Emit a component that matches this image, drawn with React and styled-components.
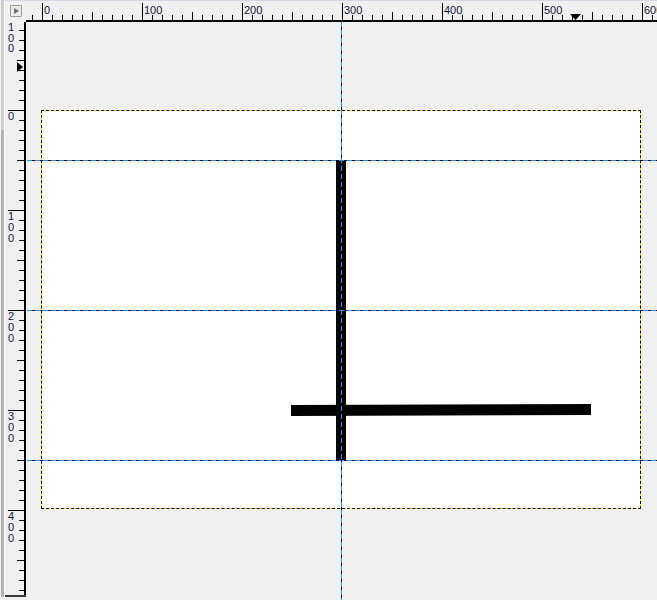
import React from 'react';
import styled, { createGlobalStyle } from 'styled-components';

const GlobalStyle = createGlobalStyle`
  html, body {
    margin: 0;
    padding: 0;
    background: #f0f0f0;
  }
  * {
    box-sizing: border-box;
  }
`;

// canvas origin on the page (ruler zero)
const ORIGIN_X = 42;
const ORIGIN_Y = 110;

const Window = styled.div`
  display: flex;
  width: 657px;
  height: 600px;
  overflow: hidden;
  background: #f0f0f0;
  font-family: 'Liberation Sans', Arial, sans-serif;
`;

const EdgeStrip = styled.div`
  width: 5px;
  height: 597px;
  background: linear-gradient(#cdcdcd 0 130px, #b4b4b4 130px);
  border-left: 1px solid #f0f0f0;
  border-right: 1px solid #fbfbfb;
`;

const Workspace = styled.div`
  flex: 1;
  display: grid;
  grid-template-columns: 21px 1fr;
  grid-template-rows: 22px 1fr;
`;

const Corner = styled.div`
  display: flex;
  align-items: flex-start;
  padding: 5px 0 0 5px;
  box-shadow: inset 0 1px 0 #d6d6e6;
`;

const NavButton = styled.div`
  width: 12px;
  height: 12px;
  border: 1px solid #9c9c9c;
  border-radius: 1px;
  background: #ebebeb;
  display: flex;
  align-items: center;
  justify-content: center;

  &::after {
    content: '';
    display: block;
    margin-left: 1px;
    border-left: 5px solid #6c6c6c;
    border-top: 3.5px solid transparent;
    border-bottom: 3.5px solid transparent;
  }
`;

const RulerSvg = styled.svg`
  display: block;
  overflow: hidden;

  text {
    font-family: 'Liberation Sans', Arial, sans-serif;
    font-size: 11px;
    fill: #14143a;
  }
`;

const Viewport = styled.div`
  position: relative;
  overflow: hidden;
  padding: 88px 0 0 15px;
`;

const ImageFrame = styled.div`
  width: 600px;
  height: 399px;
  border: 1px dashed #000;
  background: linear-gradient(#fff, #fff) padding-box, #ffe600 border-box;
`;

const Drawing = styled.svg`
  display: block;
`;

const Guide = styled.div`
  position: absolute;
  ${(p) =>
    p.$vertical
      ? `
    top: 0;
    bottom: 0;
    left: ${p.$at}px;
    width: 1px;
    background: repeating-linear-gradient(to bottom, #1e90ff 0 5px, #000 5px 8px);
  `
      : `
    left: 1px;
    right: 0;
    top: ${p.$at}px;
    height: 1px;
    background: repeating-linear-gradient(to right, #1e90ff 0 5px, #000 5px 8px);
  `}
`;

const range = (from, to, step) => {
  const out = [];
  for (let v = from; v <= to; v += step) out.push(v);
  return out;
};

const TopRuler = () => (
  <RulerSvg width="631" height="22" viewBox="26 0 631 22">
    <rect x="26" y="0" width="631" height="1" fill="#d6d6e6" />
    {range(-10, 620, 10).map((v) => {
      const x = ORIGIN_X + v + 0.5;
      const y1 = v % 100 === 0 ? 3 : v % 50 === 0 ? 12 : 15;
      return <line key={v} x1={x} x2={x} y1={y1} y2="20" stroke="#000" strokeWidth="1" />;
    })}
    {range(0, 600, 100).map((v) => (
      <text key={v} x={ORIGIN_X + v + 2} y="14">
        {v}
      </text>
    ))}
    <rect x="26" y="20" width="631" height="2" fill="#000" />
    <polygon points="570,14 581,14 575.5,20" fill="#000" />
  </RulerSvg>
);

const LeftRuler = () => (
  <RulerSvg width="21" height="578" viewBox="5 22 21 578">
    {range(-110, 490, 10).map((v) => {
      const y = ORIGIN_Y + v + 0.5;
      const x1 = v % 100 === 0 ? 8 : v % 50 === 0 ? 17 : 19;
      return <line key={v} x1={x1} x2="24" y1={y} y2={y} stroke="#000" strokeWidth="1" />;
    })}
    {range(-100, 400, 100).map((v) =>
      String(v)
        .split('')
        .map((ch, i) => (
          <text key={`${v}-${i}`} x="8" y={ORIGIN_Y + v + 10 + i * 10.8}>
            {ch}
          </text>
        ))
    )}
    <rect x="24" y="22" width="2" height="575" fill="#000" />
    <rect x="5" y="595" width="21" height="2" fill="#3a3a3a" />
    <polygon points="17,62 17,72 23,67" fill="#000" />
  </RulerSvg>
);

export default function App() {
  return (
    <>
      <GlobalStyle />
      <Window>
        <EdgeStrip />
        <Workspace>
          <Corner>
            <NavButton />
          </Corner>
          <TopRuler />
          <LeftRuler />
          <Viewport>
            <ImageFrame>
              <Drawing width="598" height="397" viewBox="0 0 598 397">
                <rect x="294" y="49" width="10" height="300" fill="#000" />
                <polygon points="249,294 549,293 549,304 249,305" fill="#000" />
              </Drawing>
            </ImageFrame>
            <Guide $at={138} />
            <Guide $at={288} />
            <Guide $at={438} />
            <Guide $vertical $at={315} />
          </Viewport>
        </Workspace>
      </Window>
    </>
  );
}
